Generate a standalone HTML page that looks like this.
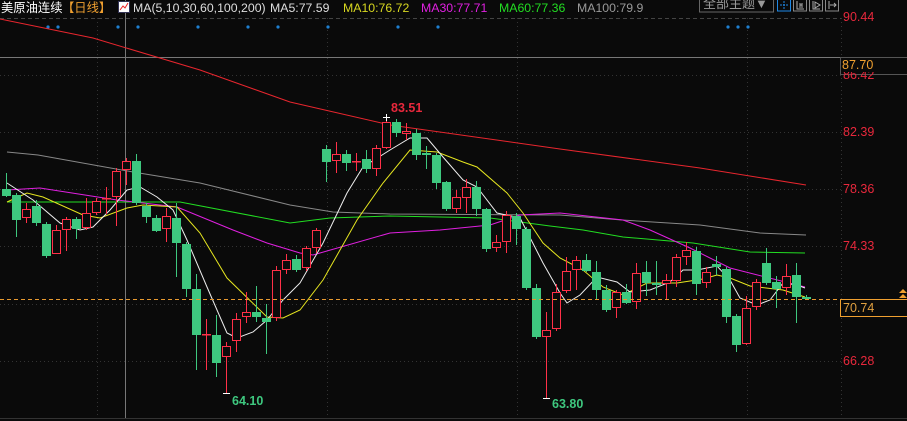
<!DOCTYPE html>
<html><head><meta charset="utf-8"><style>
html,body{margin:0;padding:0;background:#0a0a0a;}
body{width:907px;height:421px;overflow:hidden;position:relative;font-family:"Liberation Sans","Noto Sans CJK SC",sans-serif;}
svg{position:absolute;left:0;top:0;}
.hd{position:absolute;top:0;font-size:12.3px;line-height:16px;white-space:nowrap;color:#ddd;}
.ax{position:absolute;left:843px;font-size:12.5px;color:#e8283c;line-height:14px;}
</style></head><body>
<svg width="907" height="421" xmlns="http://www.w3.org/2000/svg">
<g stroke="#333" stroke-width="1" stroke-dasharray="1,3" shape-rendering="crispEdges">
<line x1="0" y1="18.5" x2="841" y2="18.5" stroke="#444" stroke-dasharray="4,3"/>
<line x1="0" y1="75.5" x2="841" y2="75.5"/>
<line x1="0" y1="132.5" x2="841" y2="132.5"/>
<line x1="0" y1="189.5" x2="841" y2="189.5"/>
<line x1="0" y1="246.5" x2="841" y2="246.5"/>
<line x1="0" y1="304.5" x2="841" y2="304.5"/>
<line x1="0" y1="361.5" x2="841" y2="361.5"/>
<line x1="97.5" y1="18" x2="97.5" y2="418"/>
<line x1="327.5" y1="18" x2="327.5" y2="418"/>
<line x1="517.5" y1="18" x2="517.5" y2="418"/>
<line x1="747.5" y1="18" x2="747.5" y2="418"/>
<line x1="841.5" y1="18" x2="841.5" y2="418"/>
</g>
<line x1="0" y1="418.5" x2="907" y2="418.5" stroke="#333"/>
<g fill="#1e7fd0">
<circle cx="48" cy="27" r="1.6"/><circle cx="58" cy="27" r="1.6"/><circle cx="118" cy="27" r="1.6"/><circle cx="138" cy="27" r="1.6"/><circle cx="198" cy="27" r="1.6"/><circle cx="248" cy="27" r="1.6"/><circle cx="278" cy="27" r="1.6"/><circle cx="328" cy="27" r="1.6"/><circle cx="398" cy="27" r="1.6"/><circle cx="438" cy="27" r="1.6"/><circle cx="728" cy="27" r="1.6"/><circle cx="738" cy="27" r="1.6"/><circle cx="748" cy="27" r="1.6"/>
</g>
<line x1="125.5" y1="0" x2="125.5" y2="418" stroke="#777"/>
<line x1="0" y1="57.5" x2="841" y2="57.5" stroke="#777"/>
<g fill="none" stroke-width="1">
<polyline stroke="#e8262e" points="0,19 93,38 200,70 290,102 390,125 560,149 700,168 806,185"/>
<polyline stroke="#888" points="7,152 38,155 133,172 200,183 290,205 333,212 390,214 560,215 622,220 700,225 760,233 806,235"/>
<polyline stroke="#22dd22" points="7,202 180,202 290,223 330,218 390,216 440,217 490,218 550,226 583,230 623,237 693,243 750,252 805,253"/>
<polyline stroke="#e020e0" points="7,190 40,188 117,200 177,207 233,230 267,243 300,253 313,255 390,233 440,230 490,225 520,215 560,213 623,220 650,230 690,248 730,268 805,287"/>
<polyline stroke="#e6e620" points="7,202 27,193 43,197 83,215 100,218 127,208 143,205 177,207 200,233 227,278 267,317 283,318 300,310 323,280 357,220 383,183 410,150 437,152 463,162 477,167 507,193 523,213 543,243 560,258 583,270 603,287 623,295 647,283 677,283 703,279 717,275 730,278 750,286 783,290 805,297"/>
<polyline stroke="#eee" points="7,183 33,200 60,223 80,230 93,227 110,210 127,190 140,187 157,197 173,210 187,240 207,287 227,333 237,338 253,332 267,320 283,300 300,283 323,243 347,193 363,167 390,150 410,138 427,138 443,157 463,180 477,187 497,213 520,218 543,263 560,293 567,303 580,295 597,277 617,282 630,292 650,290 670,282 683,270 697,270 717,266 730,280 740,298 757,305 770,300 783,283 797,285 805,288"/>
</g>
<g shape-rendering="crispEdges">
<path stroke="#3ec87f" fill="none" d="M6.5 173V197M16.5 193V237M36.5 200V226M46.5 222V258M76.5 217V239M136.5 154V205M146.5 203V223M156.5 215V232M176.5 203V277M186.5 242V297M196.5 274V370M216.5 315V377M256.5 286V322M266.5 304V354M296.5 255V272M326.5 145V182M346.5 150V171M366.5 150V173M396.5 119V137M416.5 129V160M426.5 146V169M436.5 153V189M446.5 181V211M476.5 181V216M486.5 208V252M516.5 213V245M526.5 227V290M536.5 284V339M586.5 254V272M596.5 261V300M606.5 285V312M626.5 284V304M646.5 261V296M656.5 261V295M696.5 247V295M716.5 256V275M726.5 267V323M736.5 314V352M766.5 248V285M776.5 276V308M796.5 263V323M806.5 295V300"/>
<path fill="#3ec87f" d="M2 189h9v7h-9zM12 195h9v25h-9zM32 206h9v17h-9zM42 224h9v32h-9zM72 219h9v10h-9zM132 161h9v42h-9zM142 206h9v11h-9zM152 218h9v13h-9zM172 218h9v25h-9zM182 244h9v45h-9zM192 289h9v46h-9zM212 335h9v28h-9zM252 312h9v5h-9zM262 318h9v4h-9zM292 259h9v11h-9zM322 149h9v13h-9zM342 154h9v9h-9zM362 159h9v10h-9zM392 122h9v11h-9zM412 133h9v22h-9zM422 153h9v2h-9zM432 155h9v28h-9zM442 182h9v27h-9zM472 187h9v22h-9zM482 209h9v40h-9zM512 216h9v13h-9zM522 229h9v59h-9zM532 288h9v49h-9zM582 260h9v11h-9zM592 272h9v18h-9zM602 290h9v20h-9zM622 292h9v11h-9zM642 272h9v11h-9zM652 283h9v2h-9zM692 251h9v33h-9zM712 264h9v3h-9zM722 269h9v48h-9zM732 316h9v29h-9zM762 263h9v20h-9zM772 282h9v7h-9zM792 275h9v22h-9zM802 297h9v2h-9z"/>
<path stroke="#ff3048" fill="none" d="M26.5 203V223M56.5 225V254M66.5 217V251M86.5 198V230M96.5 198V215M106.5 187V214M116.5 168V226M126.5 158V185M166.5 208V242M206.5 319V370M226.5 342V393M236.5 313V352M246.5 292V323M276.5 266V321M286.5 254V274M306.5 246V271M316.5 228V253M336.5 142V173M356.5 153V171M376.5 145V176M386.5 117V149M406.5 123V140M456.5 190V213M466.5 179V213M496.5 235V252M506.5 211V253M546.5 312V398M556.5 284V331M566.5 257V293M576.5 256V290M616.5 290V318M636.5 263V309M666.5 274V300M676.5 254V287M686.5 242V265M706.5 267V288M746.5 296V345M756.5 279V310M786.5 264V295"/>
<path stroke="#ff3048" fill="#0a0a0a" d="M22.5 209.5h8v8h-8zM52.5 230.5h8v23h-8zM62.5 219.5h8v10h-8zM82.5 213.5h8v14h-8zM92.5 201.5h8v11h-8zM102.5 198.5h8v0.5h-8zM112.5 171.5h8v25h-8zM122.5 161.5h8v8h-8zM162.5 216.5h8v12h-8zM202.5 334.5h8v0.5h-8zM222.5 346.5h8v10h-8zM232.5 319.5h8v21h-8zM242.5 312.5h8v4h-8zM272.5 270.5h8v47h-8zM282.5 260.5h8v9h-8zM302.5 248.5h8v19h-8zM312.5 230.5h8v17h-8zM332.5 154.5h8v6h-8zM352.5 161.5h8v0.5h-8zM372.5 148.5h8v20h-8zM382.5 122.5h8v25h-8zM402.5 131.5h8v2h-8zM452.5 197.5h8v11h-8zM462.5 187.5h8v10h-8zM492.5 242.5h8v5h-8zM502.5 215.5h8v26h-8zM542.5 330.5h8v6h-8zM552.5 292.5h8v36h-8zM562.5 271.5h8v19h-8zM572.5 260.5h8v9h-8zM612.5 292.5h8v15h-8zM632.5 273.5h8v28h-8zM662.5 280.5h8v3h-8zM672.5 257.5h8v23h-8zM682.5 250.5h8v6h-8zM702.5 272.5h8v10h-8zM742.5 308.5h8v35h-8zM752.5 282.5h8v24h-8zM782.5 276.5h8v11h-8z"/>
</g>
<path stroke="#fff" d="M383 117.5h7M386.5 114v7M223 393.5h7M543 398.5h7"/>
<line x1="0" y1="299.5" x2="841" y2="299.5" stroke="#e89a30" stroke-dasharray="4,3"/>
<rect x="840.5" y="299.5" width="70" height="17" fill="#0a0a0a" stroke="#f0a030"/>
<path fill="#f0a030" d="M899 293l4-4 4 4zM899 298l4-4 4 4z"/>
<rect x="840.5" y="57.5" width="70" height="17" fill="#0a0a0a" stroke="#555"/>
<rect x="699.5" y="-2" width="74" height="14" fill="none" stroke="#666"/>
<rect x="777.5" y="-2" width="13" height="13" fill="none" stroke="#1e88e5"/>
<path d="M784 1v8M780 5h8" stroke="#1e88e5" stroke-dasharray="2,1"/>
<rect x="793.5" y="-2" width="13" height="13" fill="none" stroke="#888"/>
<path d="M797 1v8h7M800 3v5M802 3v5M800 5h2" stroke="#aaa" fill="none"/>
<rect x="809.5" y="-2" width="13" height="13" fill="none" stroke="#888"/>
<path d="M813 1v8h7M815 2l5 3-5 3z" stroke="#aaa" fill="none"/>
<rect x="825.5" y="-2" width="13" height="13" fill="none" stroke="#888"/>
<path d="M829 1v8M830 5h6M834 3l2 2-2 2" stroke="#aaa" fill="none"/>
<rect x="118.5" y="1.5" width="11" height="11" fill="#fff" stroke="#335"/>
<path d="M120 10l3-4 2 2 3-5" stroke="#e22" fill="none"/>
</svg>
<div class="hd" style="left:1px;color:#fff;font-size:12.3px">美原油连续</div>
<div class="hd" style="left:62px;color:#f0a030;font-size:12.3px">【日线】</div>
<div class="hd" style="left:133px">MA(5,10,30,60,100,200)</div>
<div class="hd" style="left:270px">MA5:77.59</div>
<div class="hd" style="left:343px;color:#d7d720">MA10:76.72</div>
<div class="hd" style="left:421px;color:#e020e0">MA30:77.71</div>
<div class="hd" style="left:499px;color:#22dd22">MA60:77.36</div>
<div class="hd" style="left:577px;color:#999">MA100:79.9</div>
<div style="position:absolute;left:703px;top:-3px;font-size:13px;color:#999;line-height:14px">全部主题▼</div>
<div class="ax" style="top:10px">90.44</div>
<div class="ax" style="top:68px">86.42</div>
<div class="ax" style="top:125px">82.39</div>
<div class="ax" style="top:182px">78.36</div>
<div class="ax" style="top:239px">74.33</div>
<div class="ax" style="top:354px">66.28</div>
<div class="ax" style="top:58px;color:#f0a030;background:#0a0a0a;left:842px;width:60px">87.70</div>
<div class="ax" style="top:301px;color:#e0a040;left:843px">70.74</div>
<div style="position:absolute;left:391px;top:101px;font-size:12.5px;color:#e8283c;font-weight:bold">83.51</div>
<div style="position:absolute;left:232px;top:394px;font-size:12.5px;color:#3ec87f;font-weight:bold">64.10</div>
<div style="position:absolute;left:552px;top:397px;font-size:12.5px;color:#3ec87f;font-weight:bold">63.80</div>
</body></html>
